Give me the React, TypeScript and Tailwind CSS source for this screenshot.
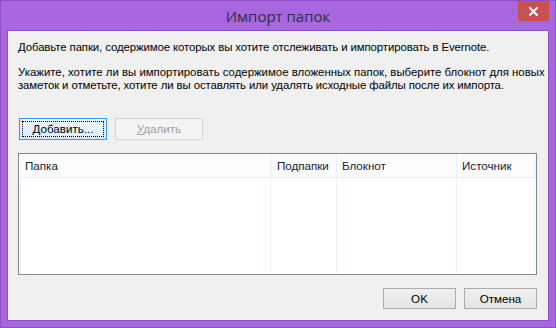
import React from "react";

function Btn({
  children,
  w,
  focus,
  disabled,
}: {
  children: React.ReactNode;
  w: string;
  focus?: boolean;
  disabled?: boolean;
}) {
  const base = "h-[22px] flex items-center justify-center text-[11.6px] leading-none " + w;
  if (disabled) {
    return (
      <div className={base + " border border-[#d5d5d5] bg-[#f4f4f4] text-[#a0a0a0]"}>{children}</div>
    );
  }
  if (focus) {
    return (
      <div className={base + " border border-[#3399ff] bg-gradient-to-b from-[#ecf4fc] to-[#dcecfc] p-[2px]"}>
        <div className="w-full h-full border border-dotted border-black flex items-center justify-center text-black">
          {children}
        </div>
      </div>
    );
  }
  return (
    <div className={base + " border border-[#acacac] bg-gradient-to-b from-[#f0f0f0] to-[#e5e5e5] text-black"}>
      {children}
    </div>
  );
}

export default function App() {
  return (
    <div
      className="w-[556px] h-[328px] bg-[#a866e0] border border-[#8c4fc6] flex flex-col"
      style={{ fontFamily: '"Liberation Sans", Arial, sans-serif' }}
    >
      <div className="h-[29px] relative flex items-center justify-center">
        <span
          className="text-[15px] text-[#2e2e3e] mt-[1px]"
          style={{ fontFamily: '"Open Sans", "Noto Sans", sans-serif' }}
        >
          Импорт папок
        </span>
        <div className="absolute left-[517px] top-0 w-[31px] h-[20px] bg-[#c75050] flex items-center justify-center">
          <svg width="9" height="9" viewBox="0 0 9 9">
            <path d="M1 1 L8 8 M8 1 L1 8" stroke="#fff" strokeWidth="2" strokeLinecap="square" />
          </svg>
        </div>
      </div>
      <div className="mx-[6px] h-[291px] border border-[#8a52c2] bg-[#f0f0f0] px-[10px] flex flex-col">
        <div className="pt-[10px] text-[11.4px] leading-[13px] text-black whitespace-nowrap">
          <p className="tracking-[-0.1px]">
            Добавьте папки, содержимое которых вы хотите отслеживать и импортировать в Evernote.
          </p>
          <p className="mt-[12px]">
            Укажите, хотите ли вы импортировать содержимое вложенных папок, выберите блокнот для новых
          </p>
          <p className="tracking-[-0.1px]">
            заметок и отметьте, хотите ли вы оставлять или удалять исходные файлы после их импорта.
          </p>
        </div>
        <div className="flex gap-[8px] mt-[26px] ml-[1px]">
          <Btn w="w-[88px]" focus>
            <span>
              <span className="underline">Д</span>обавить...
            </span>
          </Btn>
          <Btn w="w-[88px]" disabled>
            <span>
              <span className="underline">У</span>далить
            </span>
          </Btn>
        </div>
        <div className="mt-[13px] w-[519px] h-[122px] border border-[#828790] bg-white flex flex-col">
          <div className="h-[24px] bg-[#fcfcfc] border-b border-[#e5eefa] flex text-[11.6px] text-[#141c36]">
            <div className="w-[252px] border-r border-[#e5eefa] flex items-center pl-[6px]">Папка</div>
            <div className="w-[66px] border-r border-[#e5eefa] flex items-center pl-[6px]">Подпапки</div>
            <div className="w-[120px] border-r border-[#e5eefa] flex items-center pl-[5px]">Блокнот</div>
            <div className="w-[78px] border-r border-[#e5eefa] flex items-center pl-[5px]">Источник</div>
          </div>
          <div className="flex-1 flex">
            <div className="w-[252px] border-r border-[#eef3fb] flex">
              <div className="w-[2px] border-r border-[#eef3fb]"></div>
            </div>
            <div className="w-[66px] border-r border-[#eef3fb]"></div>
            <div className="w-[120px] border-r border-[#eef3fb]"></div>
            <div className="w-[78px] border-r border-[#eef3fb]"></div>
          </div>
        </div>
        <div className="flex justify-end gap-[8px] mt-[13px] mr-[1px]">
          <div className="w-[73px] h-[21px] border border-[#acacac] bg-gradient-to-b from-[#f0f0f0] to-[#e5e5e5] flex items-center justify-center text-[11.6px] text-black">
            OK
          </div>
          <div className="w-[73px] h-[21px] border border-[#acacac] bg-gradient-to-b from-[#f0f0f0] to-[#e5e5e5] flex items-center justify-center text-[11.6px] text-black">
            Отмена
          </div>
        </div>
      </div>
    </div>
  );
}
